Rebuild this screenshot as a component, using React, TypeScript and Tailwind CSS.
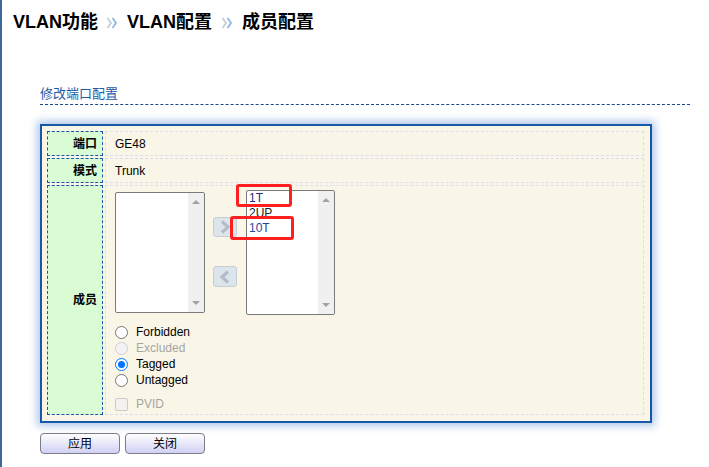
import React from "react";

function Sep() {
  return (
    <svg width="12" height="14" viewBox="0 0 12 14" className="mt-[2px]">
      <path d="M1.5 2 L5 7 L1.5 12" stroke="#c3ccd8" strokeWidth="1.8" fill="none" />
      <path d="M6.5 2 L10 7 L6.5 12" stroke="#8cb8e6" strokeWidth="1.8" fill="none" />
    </svg>
  );
}

function ListBox({ w, h, items, className }: { w: string; h: string; items: { t: string; c: string }[]; className?: string }) {
  return (
    <div className={`${w} ${h} ${className ?? ""} flex border border-[#7a7a7a] rounded-[2px] bg-white overflow-hidden`}>
      <div className="flex-1 pl-[2px] leading-[15px] text-[12px]">
        {items.map((it) => (
          <div key={it.t} className={it.c}>{it.t}</div>
        ))}
      </div>
      <div className="w-[16px] h-full bg-[#f0f0f0] flex flex-col justify-between items-center py-[7px]">
        <div className="w-0 h-0 border-x-[4px] border-x-transparent border-b-[4px] border-b-[#a3a3a3]" />
        <div className="w-0 h-0 border-x-[4px] border-x-transparent border-t-[4px] border-t-[#a3a3a3]" />
      </div>
    </div>
  );
}

function ArrowBtn({ dir, className }: { dir: "r" | "l"; className?: string }) {
  return (
    <div className={`w-[24px] h-[20px] rounded-[3px] border border-[#c5ced6] bg-[#dde5ec] flex items-center justify-center ${className ?? ""}`}>
      <svg width="22" height="18" viewBox="0 0 22 18">
        {dir === "r" ? (
          <path d="M8 3.5 L14 9 L8 14.5" stroke="#b3bdc7" strokeWidth="3.2" fill="none" />
        ) : (
          <path d="M14 3.5 L8 9 L14 14.5" stroke="#b3bdc7" strokeWidth="3.2" fill="none" />
        )}
      </svg>
    </div>
  );
}

function Radio({ label, checked, disabled }: { label: string; checked?: boolean; disabled?: boolean }) {
  return (
    <div className="h-[16px] flex items-center">
      {checked ? (
        <span className="w-[13px] h-[13px] rounded-full border-[1.5px] border-[#0075ff] bg-white flex items-center justify-center">
          <span className="w-[7px] h-[7px] rounded-full bg-[#0075ff]" />
        </span>
      ) : disabled ? (
        <span className="w-[13px] h-[13px] rounded-full border border-[#cfcfcf] bg-[#f3f3f3]" />
      ) : (
        <span className="w-[13px] h-[13px] rounded-full border border-[#767676] bg-white" />
      )}
      <span className={`ml-[8px] text-[12px] ${disabled ? "text-[#a5a5a5]" : "text-black"}`}>{label}</span>
    </div>
  );
}

export default function App() {
  return (
    <div className="relative w-[709px] h-[467px] bg-white border-l-2 border-[#3a6a9c] font-['Liberation_Sans','Noto_Sans_CJK_SC',sans-serif] text-[12px] text-black overflow-hidden">
      <div className="pl-[11px] pt-[10px] flex items-center text-[18px] font-bold leading-[24px] text-black">
        <span>VLAN功能</span>
        <span className="ml-[8px] mr-[9px] flex items-center"><Sep /></span>
        <span>VLAN配置</span>
        <span className="ml-[9px] mr-[9px] flex items-center"><Sep /></span>
        <span>成员配置</span>
      </div>

      <div className="ml-[38px] mt-[52px]">
        <div className="w-[650px] text-[13px] leading-[16px] text-[#1f5aa6] pb-[2px] border-b border-dashed border-[#1a4a8c]">
          修改端口配置
        </div>

        <div className="mt-[19px] w-[612px] h-[299px] border-2 border-[#1558a8] bg-[#f9f6e7] shadow-[0_0_8px_3px_rgba(80,130,210,0.45)] pt-[5px] pl-[5px] pr-[6px] flex flex-col gap-[2px]">
          <div className="flex h-[25px] gap-[2px]">
            <div className="w-[56px] border border-dashed border-[#1c55a8] bg-[#d9fcd5] flex items-center justify-end pr-[5px] font-bold">端口</div>
            <div className="flex-1 border border-dashed border-[#dcdcf4] pl-[9px] flex items-center">GE48</div>
          </div>
          <div className="flex h-[25px] gap-[2px]">
            <div className="w-[56px] border border-dashed border-[#1c55a8] bg-[#d9fcd5] flex items-center justify-end pr-[5px] font-bold">模式</div>
            <div className="flex-1 border border-dashed border-[#dcdcf4] pl-[9px] flex items-center">Trunk</div>
          </div>
          <div className="flex h-[230px] gap-[2px]">
            <div className="w-[56px] border border-dashed border-[#1c55a8] bg-[#d9fcd5] flex items-center justify-end pr-[5px] font-bold">成员</div>
            <div className="flex-1 border border-dashed border-[#dcdcf4] pl-[9px] pt-[4px]">
              <div className="flex items-start">
                <ListBox w="w-[90px]" h="h-[121px]" items={[]} className="mt-[2px]" />
                <div className="ml-[8px] flex flex-col">
                  <ArrowBtn dir="r" className="mt-[27px]" />
                  <ArrowBtn dir="l" className="mt-[29px] h-[21px]" />
                </div>
                <ListBox
                  w="w-[89px]"
                  h="h-[125px]"
                  className="ml-[9px]"
                  items={[
                    { t: "1T", c: "text-[#1e2f80]" },
                    { t: "2UP", c: "text-[#222]" },
                    { t: "10T", c: "text-[#1e4a9c]" },
                  ]}
                />
              </div>
              <div className="mt-[9px] flex flex-col">
                <Radio label="Forbidden" />
                <Radio label="Excluded" disabled />
                <Radio label="Tagged" checked />
                <Radio label="Untagged" />
                <div className="mt-[8px] h-[16px] flex items-center">
                  <span className="w-[13px] h-[13px] rounded-[2px] border border-[#cbcbcb] bg-[#f3f2ee]" />
                  <span className="ml-[8px] text-[#a5a5a5]">PVID</span>
                </div>
              </div>
            </div>
          </div>
        </div>

        <div className="mt-[10px] flex gap-[5px]">
          <div className="w-[80px] h-[21px] rounded-[4px] border border-[#7c7c88] bg-linear-to-b from-white to-[#d0d0f4] flex items-center justify-center">应用</div>
          <div className="w-[80px] h-[21px] rounded-[4px] border border-[#7c7c88] bg-linear-to-b from-white to-[#d0d0f4] flex items-center justify-center">关闭</div>
        </div>
      </div>

      <div className="absolute left-[234px] top-[184px] w-[56px] h-[23px] border-[3px] border-[#ff1f1f] rounded-[3px]" />
      <div className="absolute left-[228px] top-[216px] w-[64px] h-[24px] border-[3px] border-[#ff1f1f] rounded-[3px]" />
    </div>
  );
}
